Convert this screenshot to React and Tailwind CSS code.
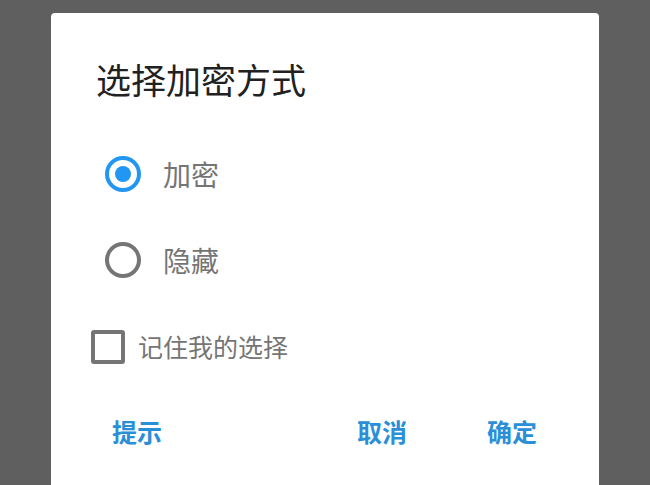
import React, { useState } from 'react';

const font = { fontFamily: '"Noto Sans CJK SC", "Noto Sans", sans-serif' };

function Radio({ checked }) {
    return (
        <span
            className={`flex h-[36px] w-[36px] items-center justify-center rounded-full border-[4px] ${
                checked ? 'border-[#2196f3]' : 'border-[#757575]'
            }`}
        >
            {checked && <span className="h-[16px] w-[16px] rounded-full bg-[#2196f3]" />}
        </span>
    );
}

export default function App() {
    const [mode, setMode] = useState('encrypt');
    const options = [
        { key: 'encrypt', label: '加密' },
        { key: 'hide', label: '隐藏' },
    ];

    return (
        <div className="h-[485px] w-[650px] overflow-hidden bg-[#5f5f5f] pt-[13px] pl-[51px]" style={font}>
            <div className="h-[500px] w-[548px] rounded-[4px] bg-white">
                <h1 className="pt-[54px] pl-[45px] text-[35px] leading-[24px] text-[#212121]">选择加密方式</h1>

                <div className="mt-[65px] flex flex-col gap-[50px] pl-[54px]">
                    {options.map((o) => (
                        <button
                            key={o.key}
                            onClick={() => setMode(o.key)}
                            className="flex h-[36px] items-center gap-[22px] text-left"
                        >
                            <Radio checked={mode === o.key} />
                            <span className="text-[28px] text-[#757575]">{o.label}</span>
                        </button>
                    ))}
                </div>

                <div className="mt-[50px] flex items-center gap-[13px] pl-[40px]">
                    <span className="h-[34px] w-[34px] rounded-[3px] border-[4px] border-[#757575]" />
                    <span className="text-[25px] text-[#757575]">记住我的选择</span>
                </div>

                <div className="mt-[47px] flex items-center pl-[61px] pr-[62px] text-[25px] font-bold text-[#2b8fd8]">
                    <span>提示</span>
                    <span className="ml-auto">取消</span>
                    <span className="ml-[80px]">确定</span>
                </div>
            </div>
        </div>
    );
}
